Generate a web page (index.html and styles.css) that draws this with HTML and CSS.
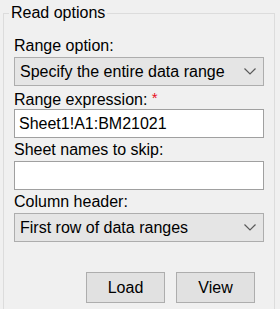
FILE: index.html
```html
<!DOCTYPE html>
<html lang="en">
<head>
<meta charset="utf-8"/>
<meta content="width=device-width, initial-scale=1.0" name="viewport"/>
<title>Read options</title>
<link rel="stylesheet" href="styles.css">
</head>
<body>
<!-- Grupo de opciones -->
<fieldset class="read-options">
<legend>Read options</legend>
<div class="field-label">Range option:</div>
<div class="combo">
<span>Specify the entire data range</span>
<svg class="chevron" width="12" height="7" viewBox="0 0 12 7"><path d="M0.5 0.5 L6 6 L11.5 0.5" fill="none" stroke="#5a5a5a" stroke-width="1.2"/></svg>
</div>
<div class="field-label">Range expression: <span class="required">*</span></div>
<div class="text-input">Sheet1!A1:BM21021</div>
<div class="field-label">Sheet names to skip:</div>
<div class="text-input"></div>
<div class="field-label">Column header:</div>
<div class="combo">
<span>First row of data ranges</span>
<svg class="chevron" width="12" height="7" viewBox="0 0 12 7"><path d="M0.5 0.5 L6 6 L11.5 0.5" fill="none" stroke="#5a5a5a" stroke-width="1.2"/></svg>
</div>
<div class="acciones">
<button class="btn">Load</button>
<button class="btn">View</button>
</div>
</fieldset>
</body>
</html>
```

FILE: styles.css
```css
* {
  box-sizing: border-box;
  font-family: 'Liberation Sans', Arial, sans-serif;
}

html {
  overflow: hidden;
}

body {
  margin: 0;
  padding: 4px 0 0 3px;
  background-color: #f0f0f0;
  color: #000;
  font-size: 16px;
}

.read-options {
  width: 272px;
  height: 305px;
  margin: 0;
  padding: 13px 10px 0 10px;
  border: 1px solid #dcdcdc;
  border-bottom: none;
}

.read-options legend {
  margin-left: -5px;
  padding: 0 2px;
  line-height: 18px;
}

.field-label {
  height: 21px;
  line-height: 21px;
  margin-bottom: 1px;
}

.required {
  color: #e81123;
  font-size: 15px;
  vertical-align: 2px;
}

.combo {
  display: flex;
  align-items: center;
  justify-content: space-between;
  height: 29px;
  padding: 0 7px 0 5px;
  background-color: #e5e5e5;
  border: 1px solid #adadad;
  margin-bottom: 1px;
}

.chevron {
  display: block;
}

.text-input {
  height: 29px;
  line-height: 27px;
  padding: 0 4px;
  background: white;
  border: 1px solid #a0a0a0;
  margin-bottom: 1px;
}

.acciones {
  display: flex;
  justify-content: flex-end;
  gap: 11px;
  margin-top: 30px;
  padding-right: 9px;
}

.btn {
  width: 79px;
  height: 31px;
  padding: 0;
  background-color: #e1e1e1;
  border: 1px solid #adadad;
  font-size: 16px;
  color: #000;
}
```
